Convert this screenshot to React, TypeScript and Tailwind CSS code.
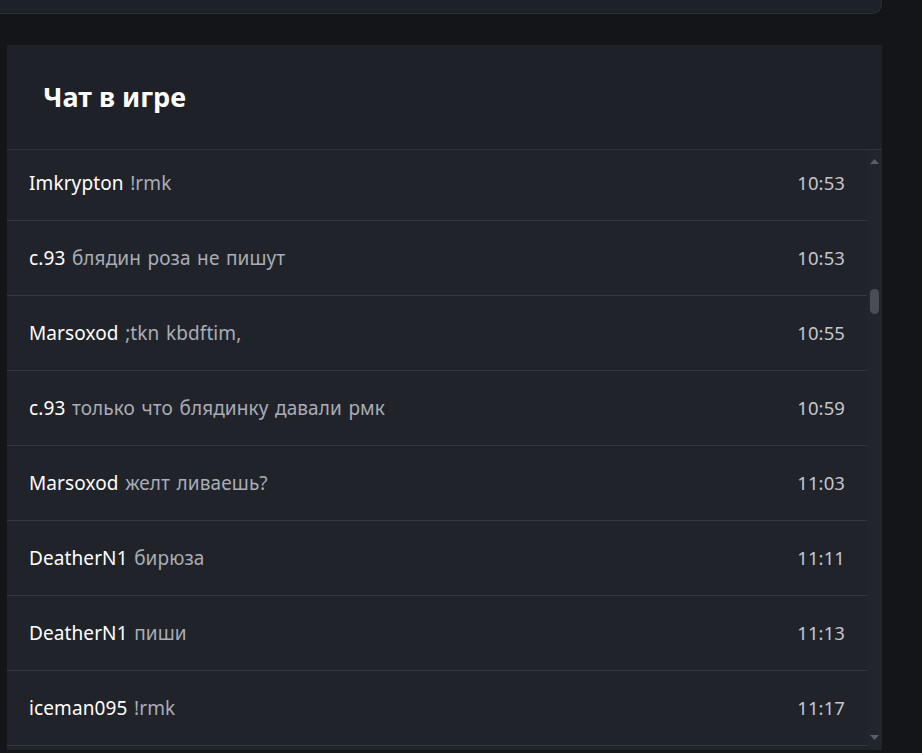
import React from "react";

const messages = [
  { user: "Imkrypton", text: "!rmk", time: "10:53" },
  { user: "c.93", text: "блядин роза не пишут", time: "10:53" },
  { user: "Marsoxod", text: ";tkn kbdftim,", time: "10:55" },
  { user: "c.93", text: "только что блядинку давали рмк", time: "10:59" },
  { user: "Marsoxod", text: "желт ливаешь?", time: "11:03" },
  { user: "DeatherN1", text: "бирюза", time: "11:11" },
  { user: "DeatherN1", text: "пиши", time: "11:13" },
  { user: "iceman095", text: "!rmk", time: "11:17" },
];

export default function App() {
  return (
    <div
      className="min-h-screen bg-[#141519] overflow-hidden"
      style={{ fontFamily: '"Noto Sans", "Open Sans", sans-serif' }}
    >
      <div className="h-[14px] w-[882px] bg-[#1f2128] rounded-br-[10px] border-b border-r border-[#2c2f37]" />
      <div className="mt-[31px] ml-[7px] w-[875px] h-[705px] bg-[#1f2128] flex flex-col">
        <div className="h-[105px] shrink-0 border-b border-[#30333b] flex items-center pl-[36px]">
          <h2 className="text-[27px] font-bold text-white">Чат в игре</h2>
        </div>
        <div className="flex flex-1 min-h-0">
          <div className="flex-1 overflow-hidden bg-[#21232a]">
            <div className="-mt-[4px]">
              {messages.map((m, i) => (
                <div
                  key={i}
                  className="h-[75px] border-b border-[#34373f] flex items-center justify-between pl-[22px] pr-[22px] text-[19px] tracking-[0.1px] [word-spacing:1.5px]"
                >
                  <div>
                    <span className="text-white">{m.user}</span>{" "}
                    <span className="text-[#a8adb6]">{m.text}</span>
                  </div>
                  <span className="text-[#c3c7ce] text-[18.5px]">{m.time}</span>
                </div>
              ))}
            </div>
          </div>
          <div className="w-[15px] shrink-0 bg-[#23252c] flex flex-col items-center">
            <svg width="9" height="5" viewBox="0 0 9 5" className="mt-[9px]">
              <polygon points="4.5,0 9,5 0,5" fill="#5b5e66" />
            </svg>
            <div className="mt-[125px] w-[9px] h-[25px] rounded-full bg-[#4a4d55]" />
            <div className="flex-1" />
            <svg width="9" height="5" viewBox="0 0 9 5" className="mb-[10px]">
              <polygon points="0,0 9,0 4.5,5" fill="#5b5e66" />
            </svg>
          </div>
        </div>
      </div>
    </div>
  );
}
